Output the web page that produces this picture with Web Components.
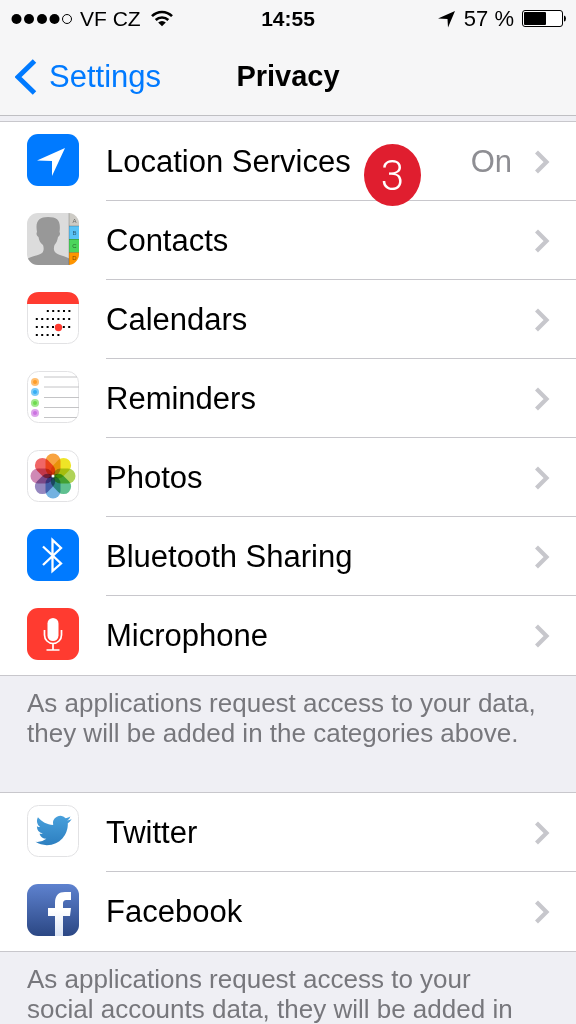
<!DOCTYPE html>
<html lang="en">
<head>
<meta charset="utf-8">
<meta name="viewport" content="width=device-width, initial-scale=1">
<title>Privacy</title>
<style>
  body { margin: 0; background: #efeff4; color: #000; font-family: "Liberation Sans", Arial, sans-serif; }
</style>
</head>
<body>
<nav-header heading="Privacy" back="Settings">
  <status-bar slot="status" carrier="VF CZ" time="14:55" battery="57 %"></status-bar>
</nav-header>
<main>
  <settings-group>
    <settings-row icon="location" value="On">Location Services<step-badge slot="badge">3</step-badge></settings-row>
    <settings-row icon="contacts">Contacts</settings-row>
    <settings-row icon="calendar">Calendars</settings-row>
    <settings-row icon="reminders">Reminders</settings-row>
    <settings-row icon="photos">Photos</settings-row>
    <settings-row icon="bluetooth">Bluetooth Sharing</settings-row>
    <settings-row icon="microphone">Microphone</settings-row>
    <span slot="note">As applications request access to your data, they will be added in the categories above.</span>
  </settings-group>
  <settings-group last>
    <settings-row icon="twitter">Twitter</settings-row>
    <settings-row icon="facebook">Facebook</settings-row>
    <span slot="note">As applications request access to your social accounts data, they will be added in</span>
  </settings-group>
</main>

<script>
const define = (name, render) => customElements.define(name, class extends HTMLElement {
  connectedCallback() {
    if (this.shadowRoot) return;
    this.attachShadow({ mode: 'open' }).innerHTML = render(this);
  }
});

const petals = ['#f7931e', '#ece000', '#a2cc3a', '#43b57c', '#5aa5dc', '#8272b4', '#c774a8', '#ee4b4b']
  .map((c, i) => `<rect x="18.5" y="3.5" width="15" height="22.5" rx="7.5" fill="${c}" transform="rotate(${i * 45} 26 26)"/>`).join('');

const calendarDots = [[20, 5, 19], [9, 7, 27], [9, 7, 35], [9, 5, 43]]
  .map(([x, n, y]) => Array.from({ length: n }, (_, i) =>
    `<rect x="${x + i * 5.4 - .2}" y="${y - 1}" width="2" height="2"/>`).join('')).join('');

const frame = '<rect x=".5" y=".5" width="51" height="51" rx="11" fill="#fff" stroke="#e2e2e4"/>';

const icons = {
  location: `<rect width="52" height="52" rx="11" fill="#007aff"/>
    <path d="M38 14 10 26.500 25 27V42Z" fill="#fff"/>`,
  contacts: `<g clip-path="url(#r)"><rect width="52" height="52" fill="#dcdcdc"/>
    <path d="M0 52V46C4 43 11 43 15 40 17 38 17 35 16 32 13 30 12 27 11.500 24 9.500 23 9 20 10 19 8 8 12 4 21 4 31 4 34 8 32.500 19 33.500 20 33 23 31 24 30.500 27 29.500 30 27.500 32 26.500 35 26.500 38 29 40 33 43 39 43 43 46V52Z" fill="#989898"/>
    <rect x="42" width="10" height="13" fill="#cdcbc5"/><rect x="42" y="13" width="10" height="13" fill="#5ac3f7"/>
    <rect x="42" y="26" width="10" height="13.500" fill="#4cd55c"/><rect x="42" y="39.500" width="10" height="13" fill="#ff9500"/>
    <path d="M42 0V52M42 13H52M42 26.500H52M42 39.500H52" stroke="#0003" fill="none"/>
    <g font-family="Liberation Sans, sans-serif" font-size="6" fill="#0008" text-anchor="middle"><text x="47.500" y="10">A</text><text x="47.500" y="22">B</text><text x="47.500" y="35">C</text><text x="47.500" y="47">D</text></g></g>`,
  calendar: `${frame}<path d="M0 12C0 4 5 0 12 0H40C47 0 52 4 52 12Z" fill="#ff3b30"/>${calendarDots}
    <circle cx="31.500" cy="35.500" r="3.700" fill="#ff3b30"/>`,
  reminders: `${frame}<path d="M17 6H50M17 16H52M17 26.500H52M17 36.500H52M17 46.500H50" stroke="#c4c4c6" fill="none"/>
    ${[['#ff9d28', 11], ['#35aef5', 21], ['#6edb4e', 32], ['#cc73e1', 42]].map(([c, y]) =>
      `<circle cx="8" cy="${y}" r="4" fill="${c}" opacity=".65"/><circle cx="8" cy="${y}" r="2" fill="${c}"/>`).join('')}`,
  photos: `${frame}<g class="petals">${petals}</g><circle cx="26" cy="26" r="1.500" fill="#fff"/>`,
  bluetooth: `<rect width="52" height="52" rx="11" fill="#007aff"/>
    <path d="M16 17.500 34 34.500 25.500 42V11L34 19 16 36" fill="none" stroke="#fff" stroke-width="2.300"/>`,
  microphone: `<rect width="52" height="52" rx="11" fill="#ff3b30"/>
    <rect x="20.500" y="10" width="11" height="23" rx="5.500" fill="#fff"/>
    <path d="M17.500 22V27A8.500 8.500 0 0 0 34.500 27V22M26 36V42M19.500 42H32.500" fill="none" stroke="#fff" stroke-width="1.700"/>`,
  twitter: `<linearGradient id="t" x2="0" y2="1"><stop stop-color="#48a0dc"/><stop offset="1" stop-color="#2d7fc0"/></linearGradient>${frame}
    <g transform="translate(8.500 7.500) scale(1.500)"><path fill="url(#t)" d="M23.950 4.570a10 10 0 0 1-2.820.770 4.960 4.960 0 0 0 2.160-2.720c-.950.550-2 .950-3.130 1.180a4.920 4.920 0 0 0-8.380 4.480C7.690 8.090 4.070 6.130 1.640 3.160a4.900 4.900 0 0 0-.670 2.480c0 1.710.870 3.210 2.190 4.090a4.900 4.900 0 0 1-2.230-.610v.060a4.920 4.920 0 0 0 3.950 4.830 5 5 0 0 1-2.210.080 4.940 4.940 0 0 0 4.600 3.420A9.870 9.870 0 0 1 0 19.540a14 14 0 0 0 7.550 2.210c9.050 0 14-7.500 14-13.980 0-.210 0-.420-.020-.630a10 10 0 0 0 2.460-2.550z"/></g>`,
  facebook: `<linearGradient id="f" x2="0" y2="1"><stop stop-color="#5e82cf"/><stop offset="1" stop-color="#2b4784"/></linearGradient>
    <linearGradient id="w" x2="0" y2="1"><stop offset=".4" stop-color="#fff"/><stop offset="1" stop-color="#dce5f5"/></linearGradient>
    <rect width="52" height="52" rx="11" fill="url(#f)"/>
    <path d="M28 52V32H21V24H28V19C28 11 32 8 38 8H44V16H40C37 16 36 17 36 20V24H44L43 32H36V52Z" fill="url(#w)"/>`
};

define('app-icon', el => `
  <style>
    :host { display: block; flex: none; width: 52px; height: 52px; }
    svg { display: block; }
    .petals { isolation: isolate; }
    .petals rect { mix-blend-mode: multiply; opacity: .85; }
  </style>
  <svg width="52" height="52" viewBox="0 0 52 52" aria-hidden="true">
    <clipPath id="r"><rect width="52" height="52" rx="11"/></clipPath>${icons[el.getAttribute('name')]}
  </svg>`);

define('status-bar', el => `
  <style>
    :host { display: grid; grid-template-columns: 1fr auto 1fr; align-items: center; height: 38px; padding: 0 10px; font-size: 22px; }
    div { display: flex; align-items: center; gap: 8px; }
    .carrier { font-size: 21px; }
    time { font-size: 21px; font-weight: bold; }
    .end { justify-content: flex-end; }
    svg { display: block; flex: none; }
  </style>
  <div class="carrier">
    <svg width="62" height="12" viewBox="0 0 62 12" aria-hidden="true">
      <circle cx="6.500" cy="6" r="5"/><circle cx="19" cy="6" r="5"/><circle cx="32" cy="6" r="5"/><circle cx="44.500" cy="6" r="5"/>
      <circle cx="57" cy="6" r="4.500" fill="none" stroke="#000"/>
    </svg>
    <span>${el.getAttribute('carrier')}</span>
    <svg width="26" height="18" viewBox="0 0 26 18" aria-hidden="true">
      <g fill="none" stroke="#000" stroke-width="2.600"><path d="M3 6.200A14 14 0 0 1 23 6.200"/><path d="M6.700 10A9 9 0 0 1 19.300 10"/></g>
      <path d="M9.200 12.400A5.500 5.500 0 0 1 16.800 12.400L13 16.200Z"/>
    </svg>
  </div>
  <time>${el.getAttribute('time')}</time>
  <div class="end">
    <svg width="18" height="18" viewBox="0 0 18 18" aria-hidden="true"><path d="M17 1 0 8.500 9.500 9 10 17.500Z"/></svg>
    <span>${el.getAttribute('battery')}</span>
    <svg width="44" height="18" viewBox="0 0 44 18" aria-hidden="true">
      <rect x=".5" y=".5" width="40" height="16" rx="2.500" fill="#fff" stroke="#000"/><rect x="2" y="2" width="22" height="13" rx="1"/>
      <path d="M42 5.500Q44 6 44 8.500T42 11.500Z"/>
    </svg>
  </div>`);

define('nav-header', el => `
  <style>
    header { background: #f6f6f7; border-bottom: 1px solid #bfbfc3; }
    :host { display: block; padding-bottom: 5px; }
    nav { display: grid; grid-template-columns: 1fr auto 1fr; align-items: center; height: 77px; padding: 0 15px; }
    a { display: flex; align-items: center; gap: 12px; color: #007aff; font-size: 31px; text-decoration: none; }
    h1 { margin: 0; font-size: 29px; font-weight: bold; }
    svg { display: block; }
  </style>
  <header>
    <slot name="status"></slot>
    <nav>
      <a href="#settings"><svg width="22" height="36" viewBox="0 0 22 36" aria-hidden="true"><path d="M19.500 2 3 18 19.500 34" fill="none" stroke="#007aff" stroke-width="5"/></svg>${el.getAttribute('back')}</a>
      <h1>${el.getAttribute('heading')}</h1>
    </nav>
  </header>`);

define('settings-group', el => `
  <style>
    :host { display: block; }
    .rows { background: #fff; border: solid #c8c7cc; border-width: 1px 0; }
    ::slotted(settings-row:last-of-type) { --separator: transparent; }
    p { margin: 0; padding: 12px 34px 44px 27px; color: #77777c; font-size: 26px; line-height: 30px; }
    :host([last]) p { padding-bottom: 0; }
  </style>
  <div class="rows"><slot></slot></div>
  <p><slot name="note"></slot></p>`);

define('settings-row', el => `
  <style>
    :host { display: block; position: relative; }
    a { display: flex; align-items: center; gap: 27px; height: 79px; padding-left: 27px; color: inherit; font-size: 31px; text-decoration: none; }
    app-icon { margin-bottom: 3px; }
    .content { box-sizing: border-box; flex: 1; align-self: stretch; display: flex; align-items: center; gap: 22px; padding: 2px 26px 0 0; border-bottom: 1px solid var(--separator, #c8c7cc); }
    .label { flex: 1; }
    .value { color: #8e8e93; }
    svg { display: block; flex: none; }
  </style>
  <a href="#${el.getAttribute('icon')}">
    <app-icon name="${el.getAttribute('icon')}"></app-icon>
    <span class="content">
      <span class="label"><slot></slot></span>
      ${el.hasAttribute('value') ? `<span class="value">${el.getAttribute('value')}</span>` : ''}
      <svg width="16" height="24" viewBox="0 0 16 24" aria-hidden="true"><path d="M2.500 2 12.500 12 2.500 22" fill="none" stroke="#c7c7cc" stroke-width="4.200"/></svg>
    </span>
  </a>
  <slot name="badge"></slot>`);

define('step-badge', () => `
  <style>
    :host { position: absolute; z-index: 1; left: 364px; top: 22px; display: grid; place-items: center; width: 57px; height: 62px; border-radius: 50%; background: #e01e2f; color: #fff; font: 300 42px Roboto, "Liberation Sans", sans-serif; }
  </style>
  <slot></slot>`);
</script>
</body>
</html>
